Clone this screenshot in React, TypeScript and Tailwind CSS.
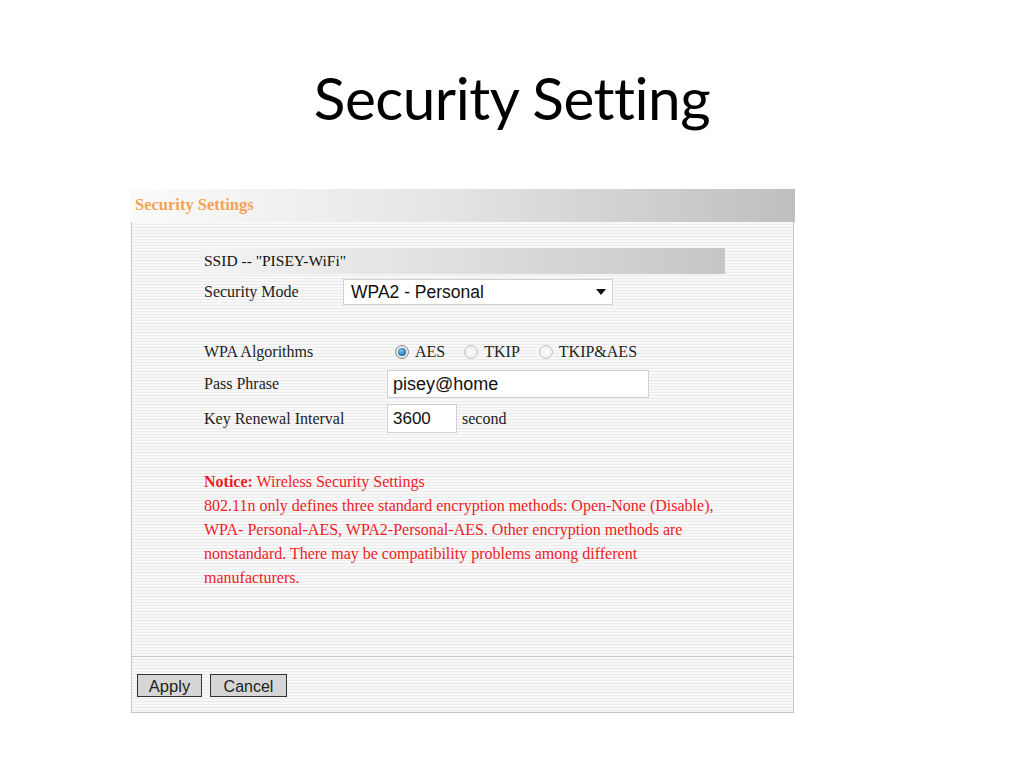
import React from 'react';

const serif = "font-['Liberation_Serif',serif]";
const sans = "font-['Liberation_Sans',Arial,sans-serif]";

const Radio: React.FC<{ checked?: boolean; label: string }> = ({ checked, label }) => (
  <label className="flex items-center gap-[6px] mr-[19px]">
    <span
      className={
        'w-[14px] h-[14px] rounded-full border flex items-center justify-center ' +
        (checked
          ? 'border-[#8a8a8a] bg-[radial-gradient(circle,#ffffff_0%,#d8d8d8_100%)]'
          : 'border-[#c4c4c4] bg-[radial-gradient(circle,#ffffff_0%,#e4e4e4_100%)]')
      }
    >
      {checked && <span className="w-[8px] h-[8px] rounded-full bg-[radial-gradient(circle_at_40%_35%,#7fc4ec_0%,#1d6fa8_70%,#14507c_100%)]" />}
    </span>
    <span className="text-[16px] text-[#222]">{label}</span>
  </label>
);

export default function App() {
  return (
    <div className={`w-[1024px] h-[768px] bg-white ${serif}`}>
      <h1 className="pt-[62px] h-[189px] text-center text-[58.5px] leading-[70px] text-black font-['Lato',sans-serif] tracking-[-0.5px]">
        Security Setting
      </h1>

      <div className="ml-[130px] w-[665px] h-[524px] flex flex-col">
        {/* header bar */}
        <div className="h-[33px] flex items-center pl-[5px] bg-[linear-gradient(to_right,#fbfbfb_0%,#e6e6e6_45%,#bfbfbf_100%)]">
          <span className="text-[16.5px] font-bold text-[#f3a352]">Security Settings</span>
        </div>

        {/* body */}
        <div className="flex-1 flex flex-col border-x border-b border-[#c8c8c8] mx-[1px] bg-[repeating-linear-gradient(to_bottom,#f8f8f8_0px,#f8f8f8_2px,#ebebeb_2px,#ebebeb_3px)]">
          <div className="flex-1 pl-[69px] pt-[26px]">
            <div className="w-[524px] h-[26px] flex items-center pl-[3px] bg-[linear-gradient(to_right,#f4f4f4_0%,#dedede_50%,#c6c6c6_100%)] text-[15.5px] text-[#111]">
              SSID -- "PISEY-WiFi"
            </div>

            <div className="flex items-center mt-[5px] pl-[3px] h-[26px] text-[16px] text-[#222]">
              <span className="w-[139px]">Security Mode</span>
              <div className={`w-[270px] h-[26px] bg-white border border-[#d0d0d0] flex items-center justify-between pl-[7px] pr-[6px] ${sans} text-[17.5px] text-[#111]`}>
                <span>WPA2 - Personal</span>
                <svg width="10" height="6" viewBox="0 0 10 6">
                  <path d="M0 0 L10 0 L5 6 Z" fill="#111" />
                </svg>
              </div>
            </div>

            <div className="flex items-center mt-[34px] pl-[3px] h-[26px] text-[16px] text-[#222]">
              <span className="w-[191px]">WPA Algorithms</span>
              <Radio checked label="AES" />
              <Radio label="TKIP" />
              <Radio label="TKIP&AES" />
            </div>

            <div className="flex items-center mt-[5px] pl-[3px] h-[28px] text-[16px] text-[#222]">
              <span className="w-[183px]">Pass Phrase</span>
              <div className={`w-[262px] h-[28px] bg-white border border-[#d0d0d0] flex items-center pl-[5px] ${sans} text-[18px] text-[#111]`}>
                pisey@home
              </div>
            </div>

            <div className="flex items-center mt-[6px] pl-[3px] h-[29px] text-[16px] text-[#222]">
              <span className="w-[183px]">Key Renewal Interval</span>
              <div className={`w-[70px] h-[29px] bg-white border border-[#d0d0d0] flex items-center pl-[5px] ${sans} text-[17px] text-[#111]`}>
                3600
              </div>
              <span className="ml-[5px]">second</span>
            </div>

            <div className="mt-[37px] pl-[3px] text-[16px] leading-[24px] text-[#ee1c25]">
              <div>
                <b>Notice:</b> Wireless Security Settings
              </div>
              <div>802.11n only defines three standard encryption methods: Open-None (Disable),</div>
              <div>WPA- Personal-AES, WPA2-Personal-AES. Other encryption methods are</div>
              <div>nonstandard. There may be compatibility problems among different</div>
              <div>manufacturers.</div>
            </div>
          </div>

          {/* footer */}
          <div className="h-[56px] border-t border-[#c8c8c8] flex items-center gap-[8px] pl-[5px] pt-[2px]">
            <button className={`w-[65px] h-[23px] bg-[#d6d6d6] border border-[#333] ${sans} text-[16.5px] text-[#222] leading-none pt-[2px]`}>
              Apply
            </button>
            <button className={`w-[77px] h-[23px] bg-[#d6d6d6] border border-[#333] ${sans} text-[16px] text-[#222] leading-none pt-[2px]`}>
              Cancel
            </button>
          </div>
        </div>
      </div>
    </div>
  );
}
